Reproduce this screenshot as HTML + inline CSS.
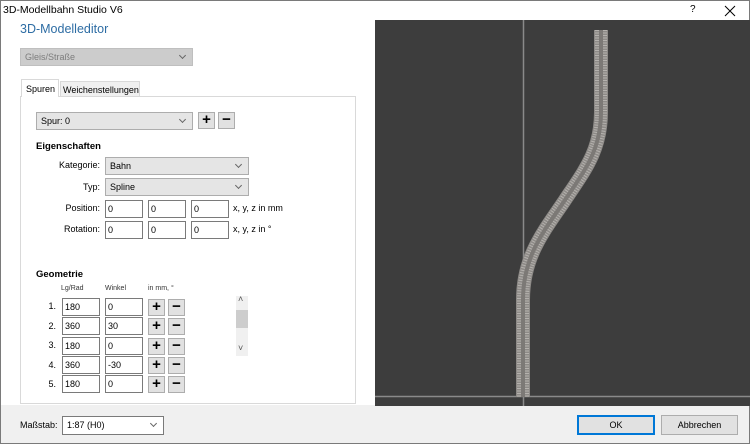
<!DOCTYPE html>
<html><head><meta charset="utf-8"><style>
*{box-sizing:border-box;margin:0;padding:0}
body{width:750px;height:444px;position:relative;background:#fff;font-family:"Liberation Sans",sans-serif;font-size:9px;color:#000;overflow:hidden}
.a{position:absolute}
.combo{position:absolute;background:#e5e5e5;border:1px solid #adadad;padding:3px 4px;font-size:9px;line-height:10px}
.combo:after{content:"";position:absolute;right:7px;top:4px;width:4px;height:4px;border-right:1px solid #666;border-bottom:1px solid #666;transform:rotate(45deg)}
.in{position:absolute;background:#fff;border:1px solid #7a7a7a;padding:3px 2px;font-size:9px;line-height:10px;height:18px}
.btn{position:absolute;background:#e1e1e1;border:1px solid #adadad;width:17px;height:17px;text-align:center;font-weight:bold;font-size:15px;line-height:14px}
.lbl{position:absolute;font-size:9px;text-align:right}
</style></head><body>
<div class="a" style="left:0;top:0;width:750px;height:444px;border:1px solid #7a7a7a"></div>
<div class="a" style="left:3px;top:4px;font-size:10.5px">3D-Modellbahn Studio V6</div>
<div class="a" style="left:690px;top:4px;font-size:10px">?</div>
<svg class="a" style="left:724px;top:5px" width="12" height="12"><path d="M1 1L11 11M11 1L1 11" stroke="#000" stroke-width="1"/></svg>
<div class="a" style="left:20px;top:22px;font-size:12.5px;color:#2e6da4">3D-Modelleditor</div>
<div class="combo" style="left:20px;top:48px;width:173px;height:18px;background:#cccccc;border-color:#bfbfbf;color:#7d7d7d">Gleis/Straße</div>
<div class="a" style="left:20px;top:96px;width:336px;height:308px;border:1px solid #d9d9d9;background:#fff"></div>
<div class="a" style="left:60px;top:81px;width:80px;height:16px;background:#f0f0f0;border:1px solid #d9d9d9;padding:3px 2px;font-size:9px">Weichenstellungen</div>
<div class="a" style="left:21px;top:79px;width:38px;height:18px;background:#fff;border:1px solid #d9d9d9;border-bottom:none;padding:4px 4px;font-size:9px">Spuren</div>
<div class="combo" style="left:36px;top:112px;width:157px;height:18px">Spur: 0</div>
<div class="btn" style="left:198px;top:112px">+</div>
<div class="btn" style="left:218px;top:112px">−</div>
<div class="a" style="left:36px;top:141px;font-weight:bold;font-size:9.5px">Eigenschaften</div>
<div class="lbl" style="left:40px;top:160px;width:60px">Kategorie:</div>
<div class="combo" style="left:105px;top:157px;width:144px;height:18px">Bahn</div>
<div class="lbl" style="left:40px;top:182px;width:60px">Typ:</div>
<div class="combo" style="left:105px;top:178px;width:144px;height:18px">Spline</div>
<div class="lbl" style="left:40px;top:203px;width:60px">Position:</div>
<div class="in" style="left:105px;top:200px;width:38px">0</div>
<div class="in" style="left:148px;top:200px;width:38px">0</div>
<div class="in" style="left:191px;top:200px;width:38px">0</div>
<div class="a" style="left:233px;top:203px">x, y, z in mm</div>
<div class="lbl" style="left:40px;top:224px;width:60px">Rotation:</div>
<div class="in" style="left:105px;top:221px;width:38px">0</div>
<div class="in" style="left:148px;top:221px;width:38px">0</div>
<div class="in" style="left:191px;top:221px;width:38px">0</div>
<div class="a" style="left:233px;top:224px">x, y, z in °</div>
<div class="a" style="left:36px;top:269px;font-weight:bold;font-size:9.5px">Geometrie</div>
<div class="a" style="left:61px;top:285px;font-size:7px;color:#333">Lg/Rad</div>
<div class="a" style="left:105px;top:285px;font-size:7px;color:#333">Winkel</div>
<div class="a" style="left:148px;top:285px;font-size:7px;color:#333">in mm, °</div>
<div class="lbl" style="left:36px;top:301px;width:20px">1.</div>
<div class="in" style="left:62px;top:298px;width:38px">180</div><div class="in" style="left:105px;top:298px;width:38px">0</div>
<div class="btn" style="left:148px;top:299px">+</div><div class="btn" style="left:168px;top:299px">−</div>
<div class="lbl" style="left:36px;top:321px;width:20px">2.</div>
<div class="in" style="left:62px;top:317px;width:38px">360</div><div class="in" style="left:105px;top:317px;width:38px">30</div>
<div class="btn" style="left:148px;top:318px">+</div><div class="btn" style="left:168px;top:318px">−</div>
<div class="lbl" style="left:36px;top:340px;width:20px">3.</div>
<div class="in" style="left:62px;top:337px;width:38px">180</div><div class="in" style="left:105px;top:337px;width:38px">0</div>
<div class="btn" style="left:148px;top:338px">+</div><div class="btn" style="left:168px;top:338px">−</div>
<div class="lbl" style="left:36px;top:360px;width:20px">4.</div>
<div class="in" style="left:62px;top:356px;width:38px">360</div><div class="in" style="left:105px;top:356px;width:38px">-30</div>
<div class="btn" style="left:148px;top:357px">+</div><div class="btn" style="left:168px;top:357px">−</div>
<div class="lbl" style="left:36px;top:379px;width:20px">5.</div>
<div class="in" style="left:62px;top:375px;width:38px">180</div><div class="in" style="left:105px;top:375px;width:38px">0</div>
<div class="btn" style="left:148px;top:376px">+</div><div class="btn" style="left:168px;top:376px">−</div>
<div class="a" style="left:236px;top:296px;width:12px;height:60px;background:#f0f0f0"></div>
<div class="a" style="left:236px;top:310px;width:12px;height:18px;background:#cdcdcd"></div>
<div class="a" style="left:238px;top:294px;font-size:9px;color:#555">˄</div>
<div class="a" style="left:238px;top:343px;font-size:9px;color:#555">˅</div>
<div class="a" style="left:1px;top:405px;width:748px;height:38px;background:#f0f0f0"></div>
<div class="a" style="left:20px;top:420px">Maßstab:</div>
<div class="combo" style="left:62px;top:416px;width:102px;height:19px;background:#fff;border-color:#7a7a7a">1:87 (H0)</div>
<div class="a" style="left:577px;top:415px;width:78px;height:20px;background:#e1e1e1;border:2px solid #0078d7;text-align:center;line-height:16px">OK</div>
<div class="a" style="left:661px;top:415px;width:77px;height:20px;background:#e1e1e1;border:1px solid #adadad;text-align:center;line-height:18px">Abbrechen</div>
<svg class="a" style="left:375px;top:20px" width="375" height="386" viewBox="375 20 375 386">
<rect x="375" y="20" width="375" height="386" fill="#3d3d3d"/>
<line x1="523.5" y1="20" x2="523.5" y2="406" stroke="#8a8a8a" stroke-width="1.5"/>
<line x1="375" y1="396.5" x2="750" y2="396.5" stroke="#8a8a8a" stroke-width="1.5"/>
<g fill="none">
<path id="t" d="M601 30 L601 112 C601 150 585 170 565 200 C545 230 523 255 523 300 L523 397" stroke="#8d8a87" stroke-width="14"/>
<path d="M601 30 L601 112 C601 150 585 170 565 200 C545 230 523 255 523 300 L523 397" stroke="#b5b2ae" stroke-width="12" stroke-dasharray="1 1.5"/>
<path d="M601 30 L601 112 C601 150 585 170 565 200 C545 230 523 255 523 300 L523 397" stroke="#7c7976" stroke-width="4"/>
</g>
</svg>
</body></html>
